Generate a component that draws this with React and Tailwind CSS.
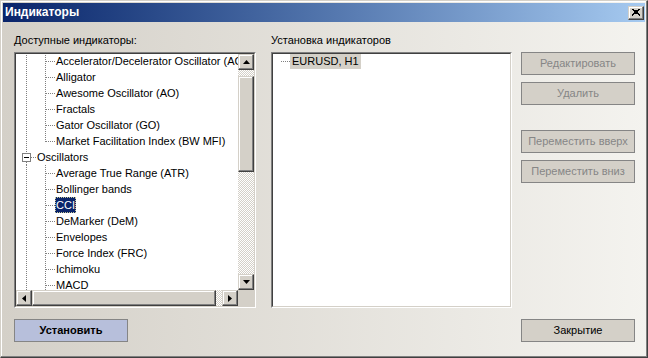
import React from 'react'

// данные дерева индикаторов
const rows = [
  { kind: 'child', text: 'Accelerator/Decelerator Oscillator (AC)' },
  { kind: 'child', text: 'Alligator' },
  { kind: 'child', text: 'Awesome Oscillator (AO)' },
  { kind: 'child', text: 'Fractals' },
  { kind: 'child', text: 'Gator Oscillator (GO)' },
  { kind: 'end', text: 'Market Facilitation Index (BW MFI)' },
  { kind: 'root', text: 'Oscillators' },
  { kind: 'child', text: 'Average True Range (ATR)' },
  { kind: 'child', text: 'Bollinger bands' },
  { kind: 'child', text: 'CCI', selected: true },
  { kind: 'child', text: 'DeMarker (DeM)' },
  { kind: 'child', text: 'Envelopes' },
  { kind: 'child', text: 'Force Index (FRC)' },
  { kind: 'child', text: 'Ichimoku' },
  { kind: 'child', text: 'MACD' },
]

const dot = { stroke: '#808080', strokeDasharray: '1 1', shapeRendering: 'crispEdges' }

function Guides({ kind }) {
  if (kind === 'root') {
    return (
      <svg width="20" height="16" className="shrink-0">
        <line x1="10.5" y1="0" x2="10.5" y2="4" {...dot} />
        <line x1="10.5" y1="13" x2="10.5" y2="16" {...dot} />
        <rect x="6.5" y="4.5" width="8" height="8" fill="#fff" stroke="#808080" shapeRendering="crispEdges" />
        <line x1="8" y1="8.5" x2="13" y2="8.5" stroke="#000" shapeRendering="crispEdges" />
        <line x1="15" y1="8.5" x2="20" y2="8.5" {...dot} />
      </svg>
    )
  }
  return (
    <svg width="39" height="16" className="shrink-0">
      <line x1="10.5" y1="0" x2="10.5" y2="16" {...dot} />
      <line x1="29.5" y1="0" x2="29.5" y2={kind === 'end' ? 9 : 16} {...dot} />
      <line x1="30" y1="8.5" x2="39" y2="8.5" {...dot} />
    </svg>
  )
}

const raised =
  'bg-[#d4d0c8] border border-t-[#d4d0c8] border-l-[#d4d0c8] border-r-[#404040] border-b-[#404040] shadow-[inset_-1px_-1px_#808080,inset_1px_1px_#ffffff]'
const checker =
  'bg-[image:repeating-conic-gradient(#d4d0c8_0%_25%,#ffffff_0%_50%)] bg-[length:2px_2px]'

function Arrow({ dir }) {
  const pts = {
    up: '0,4 7,4 3.5,0',
    down: '0,0 7,0 3.5,4',
    left: '4,0 4,7 0,3.5',
    right: '0,0 0,7 4,3.5',
  }[dir]
  const vertical = dir === 'up' || dir === 'down'
  return (
    <svg width={vertical ? 7 : 4} height={vertical ? 4 : 7}>
      <polygon points={pts} fill="#000" />
    </svg>
  )
}

function Sunken({ children, className = '' }) {
  return (
    <div className={`border border-t-[#808080] border-l-[#808080] border-r-white border-b-white ${className}`}>
      <div className="h-full border border-t-[#404040] border-l-[#404040] border-r-[#d4d0c8] border-b-[#d4d0c8] bg-white">
        {children}
      </div>
    </div>
  )
}

function Btn({ children, disabled, bg = 'bg-[#d4d0c8]', className = '' }) {
  return (
    <button
      className={`h-[23px] w-[114px] border border-[#858585] ${bg} text-[11px] leading-[21px] ${
        disabled ? 'text-[#868686]' : 'text-black'
      } ${className}`}
    >
      {children}
    </button>
  )
}

export default function App() {
  return (
    <div className="w-[648px] h-[358px] flex flex-col border border-t-[#d4d0c8] border-l-[#d4d0c8] border-r-[#404040] border-b-[#404040] shadow-[inset_-1px_-1px_#808080,inset_1px_1px_#ffffff] p-[2px] bg-linear-to-r from-[#d4d0c8] to-[#f4f3ef] font-['Liberation_Sans',Arial,sans-serif] text-[11px] text-black overflow-hidden">
      {/* заголовок окна */}
      <div className="h-[19px] shrink-0 flex items-center justify-between bg-linear-to-r from-[#0a246a] to-[#a6caf0] pl-[2px] pr-[1px]">
        <span className="text-white font-bold text-[12px] leading-[19px]">Индикаторы</span>
        <div className={`w-[16px] h-[14px] flex items-center justify-center ${raised}`}>
          <svg width="8" height="7">
            <path d="M0 0 L8 7 M1 0 L8 6 M8 0 L0 7 M7 0 L0 6" stroke="#000" strokeWidth="1" shapeRendering="crispEdges" />
          </svg>
        </div>
      </div>

      <div className="flex-1 flex flex-col pl-[11px]">
        <div className="flex mt-[12px]">
          {/* доступные индикаторы */}
          <div className="w-[242px] flex flex-col">
            <div className="h-[13px] leading-[13px]">Доступные индикаторы:</div>
            <Sunken className="mt-[5px] h-[256px]">
              <div className="flex h-full">
                <div className="flex flex-col w-[222px]">
                  <div className="h-[236px] overflow-hidden">
                    <div className="-mt-px">
                      {rows.map((r) => (
                        <div key={r.text} className="flex h-[16px] items-stretch whitespace-nowrap">
                          <Guides kind={r.kind} />
                          <span
                            className={`px-[1px] leading-[16px] ${
                              r.selected
                                ? 'bg-[#0a246a] text-white outline-1 outline-dotted outline-[#c8c89a] -outline-offset-1'
                                : ''
                            }`}
                          >
                            {r.text}
                          </span>
                        </div>
                      ))}
                    </div>
                  </div>
                  {/* горизонтальная прокрутка */}
                  <div className="h-[16px] flex">
                    <div className={`w-[16px] h-[16px] flex items-center justify-center ${raised}`}>
                      <Arrow dir="left" />
                    </div>
                    <div className={`w-[184px] h-[16px] ${raised}`} />
                    <div className={`flex-1 ${checker}`} />
                    <div className={`w-[16px] h-[16px] flex items-center justify-center ${raised}`}>
                      <Arrow dir="right" />
                    </div>
                  </div>
                </div>
                {/* вертикальная прокрутка */}
                <div className="w-[16px] flex flex-col">
                  <div className={`h-[16px] flex items-center justify-center ${raised}`}>
                    <Arrow dir="up" />
                  </div>
                  <div className={`h-[6px] ${checker}`} />
                  <div className={`h-[96px] ${raised}`} />
                  <div className={`h-[102px] ${checker}`} />
                  <div className={`h-[16px] flex items-center justify-center ${raised}`}>
                    <Arrow dir="down" />
                  </div>
                  <div className="flex-1 bg-[#d4d0c8]" />
                </div>
              </div>
            </Sunken>
          </div>

          {/* установка индикаторов */}
          <div className="ml-[15px] w-[241px] flex flex-col">
            <div className="h-[13px] leading-[13px]">Установка индикаторов</div>
            <Sunken className="mt-[5px] h-[256px]">
              <div className="flex h-[16px] whitespace-nowrap">
                <svg width="17" height="16" className="shrink-0">
                  <line x1="8" y1="7.5" x2="17" y2="7.5" {...dot} />
                </svg>
                <span className="px-[2px] bg-[#d4d0c8] leading-[15px] h-[15px]">EURUSD, H1</span>
              </div>
            </Sunken>
          </div>

          {/* кнопки справа */}
          <div className="ml-[9px] flex flex-col pt-[18px]">
            <Btn disabled>Редактировать</Btn>
            <Btn disabled className="mt-[7px]">Удалить</Btn>
            <Btn disabled className="mt-[25px]">Переместить вверх</Btn>
            <Btn disabled className="mt-[7px]">Переместить вниз</Btn>
          </div>
        </div>

        {/* нижние кнопки */}
        <div className="flex mt-[11px]">
          <Btn bg="bg-[#b7bfdb]" className="font-bold">Установить</Btn>
          <Btn className="ml-[393px]">Закрытие</Btn>
        </div>
      </div>
    </div>
  )
}
